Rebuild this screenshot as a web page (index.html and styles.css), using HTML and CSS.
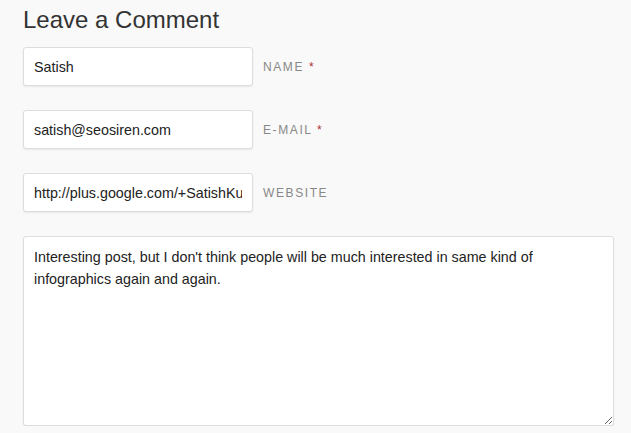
FILE: index.html
```html
<!DOCTYPE html>
<html lang="en">
<head>
  <meta charset="UTF-8" />
  <meta name="viewport" content="width=device-width, initial-scale=1.0"/>
  <title>Leave a Comment</title>
  <link rel="stylesheet" href="styles.css">
</head>
<body>
  <section id="respond">
    <h3 class="reply-title">Leave a Comment</h3>
    <form class="comment-form">
      <p class="field">
        <input type="text" id="author" value="Satish" />
        <label for="author">Name <span class="required">*</span></label>
      </p>
      <p class="field">
        <input type="text" id="email" value="satish@seosiren.com" />
        <label for="email">E-mail <span class="required">*</span></label>
      </p>
      <p class="field">
        <input type="text" id="url" value="http://plus.google.com/+SatishKumar" />
        <label for="url">Website</label>
      </p>
      <p class="comment-field">
        <textarea id="comment">Interesting post, but I don't think people will be much interested in same kind of infographics again and again.</textarea>
      </p>
    </form>
  </section>
</body>
</html>
```

FILE: styles.css
```css
body { font-family: Arial, "Liberation Sans", sans-serif; background: #f9f9f9; margin: 0; padding: 0 23px; color: #222; }
.reply-title { font-size: 24px; font-weight: normal; color: #333; margin: 6px 0 13px; line-height: 28px; }
.field { display: flex; align-items: center; gap: 10px; margin: 0 0 24px; }
.comment-field { margin: 0; }
input, textarea { font-family: Arial, "Liberation Sans", sans-serif; font-size: 14.3px; color: #222; background: #fff; border: 1px solid #ddd; border-radius: 3px; box-shadow: 0 1px 2px rgba(0,0,0,0.07); box-sizing: border-box; outline: none; }
input { width: 230px; height: 39px; padding: 0 10px; }
label { font-size: 12px; text-transform: uppercase; letter-spacing: 1.6px; color: #888; padding-top: 1px; }
.required { color: #a33; }
textarea { display: block; width: 591px; height: 190px; padding: 9px 10px; line-height: 22px; resize: vertical; }
```
